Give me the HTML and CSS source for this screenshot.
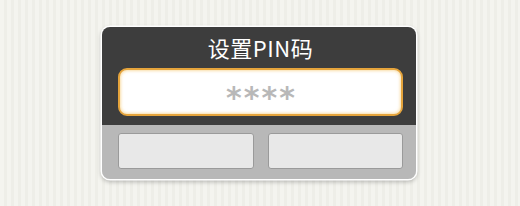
FILE: index.html
```html
<!DOCTYPE html>
<html lang="zh-CN">

<head>
    <meta charset="UTF-8">
    <title>设置PIN码</title>
    <link rel="stylesheet" href="styles.css">
</head>

<body>
    <div class="pin-dialog">
        <div class="pin-top">
            <div class="pin-title">设置PIN码</div>
            <div class="pin-input"><span class="stars">****</span></div>
        </div>
        <div class="pin-buttons">
            <div class="btn"></div>
            <div class="btn"></div>
        </div>
    </div>
</body>

</html>
```

FILE: styles.css
```css
body {
    margin: 0;
    padding: 27px 0 0 102px;
    height: 206px;
    box-sizing: border-box;
    font-family: "Noto Sans CJK SC", "Noto Sans", sans-serif;
    background: repeating-linear-gradient(90deg, #f4f4ef 0, #f4f4ef 4px, #eeeee8 4px, #eeeee8 7px);
}

.pin-dialog {
    width: 314px;
    border-radius: 8px;
    overflow: hidden;
    box-shadow: 0 0 0 1.5px #fff, 0 2px 4px 1px rgba(0, 0, 0, 0.25);
}

.pin-top {
    background: #3d3d3d;
    padding: 7px 13px 9px 16px;
}

.pin-title {
    color: #fff;
    font-size: 22px;
    line-height: 26px;
    letter-spacing: 0.5px;
    text-align: center;
    margin-bottom: 8px;
}

.pin-input {
    height: 48px;
    box-sizing: border-box;
    background: #fff;
    border: 2px solid #e5a43c;
    border-radius: 9px;
    box-shadow: inset 0 0 3px 1px rgba(245, 200, 110, 0.6);
    display: flex;
    justify-content: center;
    align-items: center;
}

.stars {
    color: #b8b8b8;
    font-family: "DejaVu Sans", sans-serif;
    font-weight: bold;
    font-size: 30px;
    letter-spacing: 2px;
    line-height: 30px;
    padding-top: 12px;
    padding-left: 2px;
}

.pin-buttons {
    background: #b8b8b8;
    padding: 8px 13px 10px 16px;
    display: flex;
    gap: 14px;
}

.btn {
    flex: 1;
    height: 36px;
    box-sizing: border-box;
    background: #e8e8e8;
    border: 1px solid #9a9a9a;
    border-radius: 3px;
}
```
